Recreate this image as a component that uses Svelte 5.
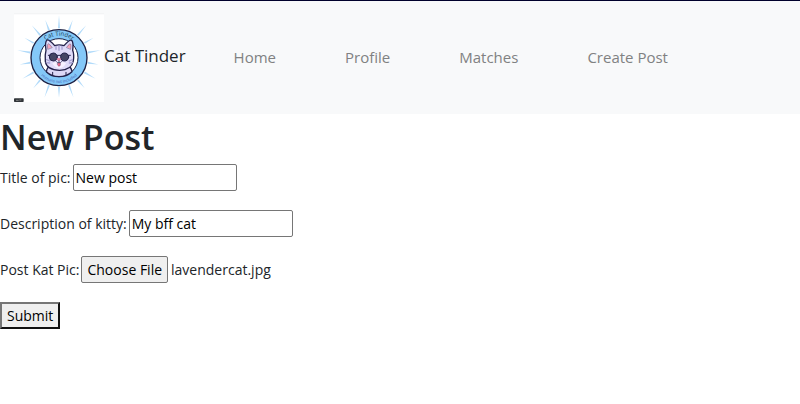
<script>
  import { onMount } from 'svelte';

  const links = ['Home', 'Profile', 'Matches', 'Create Post'];
  const rays = Array.from({ length: 18 }, (_, i) => i * 20);

  let title = $state('New post');
  let description = $state('My bff cat');
  let picker;

  onMount(() => {
    const transfer = new DataTransfer();
    transfer.items.add(new File([''], 'lavendercat.jpg', { type: 'image/jpeg' }));
    picker.files = transfer.files;
  });
</script>

<nav>
  <a class="brand" href="#home">
    <svg class="logo" viewBox="0 0 270 267" role="img" aria-label="Cat Tinder logo">
      <defs>
        <path id="upper" d="M69 134a66 66 0 0 1 132 0" />
        <path id="lower" d="M59 134a76 76 0 0 0 152 0" />
      </defs>
      <rect width="270" height="267" fill="#fff" />
      <rect width="270" height="4" fill="#f3f4f5" />
      {#each rays as angle, i}
        <path
          d={i % 2 ? 'M132 46L135 14L138 46Z' : 'M132 46L135 7L138 46Z'}
          fill="#b2dbfa"
          transform={`rotate(${angle} 135 134)`}
        />
      {/each}
      <circle cx="135" cy="134" r="84" fill="#84c8f8" stroke="#1d2144" stroke-width="4" />
      <circle cx="135" cy="134" r="57" fill="#fff" stroke="#1d2144" stroke-width="3" />
      <g stroke="#24224a" stroke-width="4" stroke-linejoin="round" stroke-linecap="round">
        <path d="M97 176Q100 158 112 160H158Q171 158 174 176Q158 191 135 191Q112 191 97 176Z" fill="#dcd8f6" />
        <path d="M116 178v8M156 178v8" stroke-width="3" />
        <path d="M96 112Q92 86 99 81Q105 79 122 98Q135 93 150 98Q167 79 173 82Q179 88 176 112Q181 124 178 144Q173 171 137 172Q98 171 94 145Q92 126 96 112Z" fill="#dfdbf8" />
        <path d="M101 108Q99 94 103 92Q109 95 114 103ZM170 108Q173 94 168 92Q162 96 158 103Z" fill="#f4a6bd" stroke-width="1" />
        <path d="M135 99v13M126 100v9M144 100v9M98 140l9 4M97 149l10 1M175 140l-9 4M176 149l-10 1" stroke="#a7a1d2" stroke-width="4" />
        <path d="M115 151Q136 138 156 151Q150 165 136 166Q122 165 115 151Z" fill="#f6f1ff" stroke="none" />
        <path d="M103 127H169" stroke-width="3" />
        <circle cx="118" cy="132" r="12" fill="#444563" stroke-width="3" />
        <circle cx="152" cy="132" r="12" fill="#444563" stroke-width="3" />
        <path d="M130 137h10l-5 6Z" fill="#f58ba4" stroke="#d96381" stroke-width="2" />
        <path d="M135 143v5M126 145q3 6 9 3q6 3 9-3" fill="none" stroke-width="2" />
        <path d="M131 150h8v7q-4 6-8 0Z" fill="#f36c8c" stroke-width="1" />
      </g>
      <text class="ring-title" text-anchor="middle"><textPath href="#upper" startOffset="50%">Cat Tinder</textPath></text>
      <text class="ring-motto" text-anchor="middle"><textPath href="#lower" startOffset="50%">Humans not included</textPath></text>
      <rect y="256" width="29" height="11" rx="2" fill="#303438" />
      <path d="M6 262h8M16 261h6" stroke="#aaa" stroke-width="2" />
    </svg>
    <span>Cat Tinder</span>
  </a>
  <ul>
    {#each links as link}
      <li><a href={'#' + link.toLowerCase().replace(' ', '-')}>{link}</a></li>
    {/each}
  </ul>
</nav>

<main>
  <h1>New Post</h1>
  <form onsubmit={(event) => event.preventDefault()}>
    <div class="row">
      <label for="title">Title of pic:</label>
      <input id="title" type="text" bind:value={title} />
    </div>
    <div class="row">
      <label for="description">Description of kitty:</label>
      <input id="description" type="text" bind:value={description} />
    </div>
    <div class="row">
      <label for="picture">Post Kat Pic:</label>
      <input id="picture" type="file" accept="image/*" bind:this={picker} />
    </div>
    <button type="submit">Submit</button>
  </form>
</main>

<style>
  :global(body) {
    background: #fff;
    color: #212529;
    font-family: 'Segoe UI', 'Open Sans', 'Noto Sans', sans-serif;
    font-size: 14px;
    line-height: 20px;
  }

  nav {
    display: flex;
    align-items: center;
    gap: 48px;
    padding: 12px 14px;
    border-top: 1px solid #00002c;
    background: #f8f9fa;
  }

  .brand {
    display: flex;
    align-items: center;
    color: #212529;
    font-size: 17px;
    text-decoration: none;
    white-space: nowrap;
  }

  .brand span {
    padding-bottom: 4px;
  }

  .logo {
    display: block;
    width: 90px;
    height: 89px;
  }

  .ring-title {
    fill: #16374c;
    font-size: 18px;
  }

  .ring-motto {
    fill: #4a5fb5;
    font-size: 12px;
  }

  ul {
    display: flex;
    gap: 69px;
    margin: 0;
    padding: 0;
    list-style: none;
  }

  li a {
    color: #808182;
    font-size: 15px;
    text-decoration: none;
    white-space: nowrap;
  }

  h1 {
    margin: 0;
    padding: 2px 0 6px;
    font-size: 34px;
    font-weight: 600;
    line-height: 42px;
  }

  form {
    display: flex;
    flex-direction: column;
    align-items: flex-start;
    gap: 19px;
  }

  .row {
    display: flex;
    align-items: center;
    gap: 2px;
  }

  input,
  button {
    box-sizing: border-box;
    height: 27px;
    margin: 0;
    font: inherit;
  }

  input[type='text'] {
    width: 164px;
    padding: 1px 2px;
    border: 1px solid #767676;
    border-radius: 2px;
    background: #fff;
    color: #000;
  }

  input[type='file'] {
    width: 240px;
  }

  input::file-selector-button {
    box-sizing: border-box;
    height: 27px;
    margin: 0 3px 0 0;
    padding: 1px 5px;
    border: 1px solid #767676;
    border-radius: 2px;
    background: #efefef;
    color: #000;
    font: inherit;
  }

  button {
    padding: 1px 5px;
    border: 2px solid;
    border-color: #767676 #111 #111 #767676;
    background: #efefef;
    color: #000;
  }
</style>
